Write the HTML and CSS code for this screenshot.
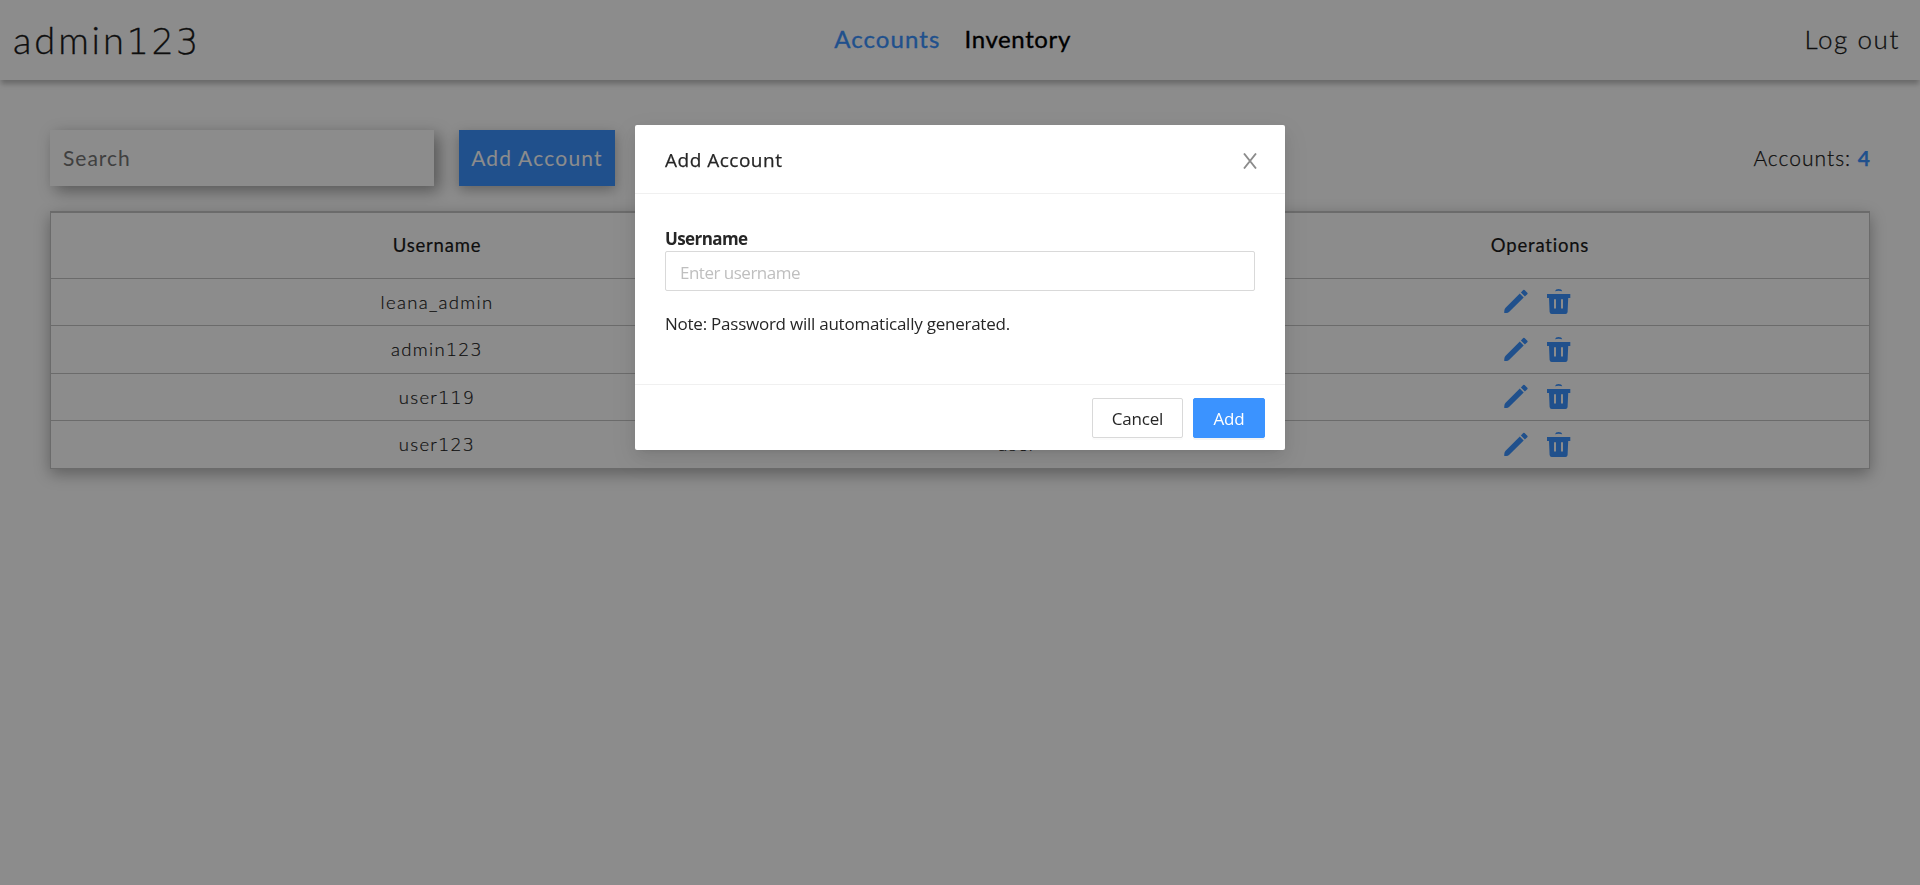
FILE: index.html
```html
<!DOCTYPE html>
<html lang="en">
<head>
<meta charset="utf-8">
<title>Accounts</title>
<link rel="stylesheet" href="styles.css">
</head>
<body>
<svg class="defs" width="0" height="0" aria-hidden="true">
  <symbol id="pencil" viewBox="0 0 24 24">
    <path d="M15.800 4 19.700 7.900 5.300 22.200Q4 23.400 2.500 23.500L.9 23.600Q.1 23.600.2 22.700L.4 20.700Q.5 19.400 1.600 18.200ZM16.900 2.900 19.200.6Q19.900 0 20.600.6L23.300 3.300Q24 4 23.300 4.700L20.900 6.900Z"/>
  </symbol>
  <symbol id="trash" viewBox="0 0 24 25">
    <path fill-rule="evenodd" d="M0 5H23.300V9H21.200L20.600 23Q20.400 25 18.500 25H4.700Q2.800 25 2.600 23L2 9H0ZM7 10.300V19.500H9V10.300ZM14 10.300V19.500H16V10.300ZM8 2.200Q8.500 0 11.500 0 14.700 0 15.200 2.200 11.500 1.500 8 2.200Z"/>
  </symbol>
</svg>
<header class="topbar">
  <div class="brand">admin<span class="num">123</span></div>
  <nav class="nav"><a class="active">Accounts</a><a class="inv">Inventory</a></nav>
  <div class="logout">Log out</div>
</header>
<main class="page">
  <div class="toolbar">
    <div class="search">Search</div>
    <div class="add-account"><span>Add Account</span></div>
    <div class="count">Accounts: <b>4</b></div>
  </div>
  <div class="table">
    <div class="row head"><div>Username</div><div>Role</div><div>Operations</div></div>
    <div class="row"><div>leana_admin</div><div>admin</div><div class="ops"><svg class="pen"><use href="#pencil"/></svg><svg class="bin"><use href="#trash"/></svg></div></div>
    <div class="row"><div>admin<span class="num">123</span></div><div>admin</div><div class="ops"><svg class="pen"><use href="#pencil"/></svg><svg class="bin"><use href="#trash"/></svg></div></div>
    <div class="row"><div>user<span class="num">119</span></div><div>user</div><div class="ops"><svg class="pen"><use href="#pencil"/></svg><svg class="bin"><use href="#trash"/></svg></div></div>
    <div class="row"><div>user<span class="num">123</span></div><div>user</div><div class="ops"><svg class="pen"><use href="#pencil"/></svg><svg class="bin"><use href="#trash"/></svg></div></div>
  </div>
</main>
<div class="overlay">
  <section class="modal">
    <div class="modal-head">
      <div class="title">Add Account</div>
      <svg class="close" viewBox="0 0 14 16"><path d="M1 .5 13 15.500M13 .5 1 15.500"/></svg>
    </div>
    <div class="modal-body">
      <div class="label">Username</div>
      <div class="field">Enter username</div>
      <p class="note">Note: Password will automatically generated.</p>
    </div>
    <div class="modal-foot">
      <div class="btn">Cancel</div>
      <div class="btn primary">Add</div>
    </div>
  </section>
</div>
</body>
</html>
```
FILE: styles.css
```css
* { box-sizing: border-box; }
body { margin: 0; background: #fff; color: #262626; font-family: Lato, sans-serif; font-weight: 300; }
.defs { position: absolute; }
.num { font-family: "DejaVu Sans", "DejaVu Sans Light", sans-serif; font-weight: 200; line-height: 1; }
.topbar { height: 80px; padding: 0 20px 0 13px; display: grid; grid-template-columns: 1fr auto 1fr; align-items: center; background: #fff; box-shadow: 0 5px 5px -1px rgba(0,0,0,.25); }
.brand { margin-bottom: 3px; font-size: 38px; line-height: 44px; letter-spacing: 2.9px; color: #1a1a1a; -webkit-text-stroke: .3px currentColor; }
.brand .num { font-size: 35px; letter-spacing: 2.4px; }
.nav { display: flex; gap: 24px; margin: 0 8px 3px 0; font-size: 24px; font-weight: 400; line-height: 30px; color: #000; -webkit-text-stroke: .35px currentColor; }
.nav .active { color: #3b93ff; letter-spacing: 1.1px; }
.nav .inv { letter-spacing: .6px; }
.logout { justify-self: end; margin-bottom: 3px; font-size: 26px; line-height: 30px; letter-spacing: 1.6px; color: #1a1a1a; -webkit-text-stroke: .3px currentColor; }
.page { padding: 50px; }
.toolbar { display: flex; height: 56px; font-size: 21px; line-height: 55px; }
.search { width: 384px; padding-left: 13px; background: #fff; color: #757575; box-shadow: 5px 5px 15px rgba(0,0,0,.38); letter-spacing: 1px; font-weight: 400; }
.add-account { width: 156px; margin-left: 25px; text-align: center; background: #3b93ff; color: #fff; box-shadow: 0 4px 12px rgba(0,0,0,.3); font-weight: 400; letter-spacing: 1.2px; white-space: nowrap; }
.count { margin-left: auto; letter-spacing: 1px; color: #1a1a1a; -webkit-text-stroke: .25px currentColor; }
.count b { color: #3b93ff; font-weight: 700; letter-spacing: 0; }
.table { margin-top: 25px; height: 258px; border: 1px solid #c4c4c4; border-top-width: 2px; box-shadow: 0 5px 15px rgba(0,0,0,.32); background: #fff; display: grid; grid-template-rows: 65px 47px 48px 47px 48px; }
.row { display: grid; grid-template-columns: 772px 388px 658px; align-items: center; text-align: center; font-size: 18.500px; line-height: 24px; letter-spacing: 1.3px; border-top: 1px solid #c4c4c4; color: #1a1a1a; padding-bottom: 1px; -webkit-text-stroke: .2px currentColor; }
.row .num { font-size: 17.500px; letter-spacing: 1.2px; }
.head { border-top: 0; font-weight: 400; letter-spacing: .8px; padding-bottom: 2px; }
.ops { display: flex; justify-content: center; gap: 19px; padding: 0 5px 0 0; fill: #3b93ff; -webkit-text-stroke: 0; }
.pen, .bin { width: 24px; height: 25px; }
.overlay { position: fixed; inset: 0; padding-top: 125px; background: rgba(0,0,0,.45); font-family: "Open Sans", sans-serif; font-weight: 400; font-size: 17px; }
.modal { width: 650px; height: 325px; margin: 0 auto; background: #fff; border-radius: 2px; display: flex; flex-direction: column; box-shadow: 0 3px 6px -4px rgba(0,0,0,.12), 0 6px 16px rgba(0,0,0,.08), 0 9px 28px 8px rgba(0,0,0,.05); }
.modal-head { height: 69px; padding: 0 28px 0 30px; border-bottom: 1px solid #f0f0f0; display: flex; align-items: center; justify-content: space-between; }
.title { margin-top: 1px; font-weight: 500; font-size: 19px; line-height: 26px; letter-spacing: .5px; -webkit-text-stroke: .25px currentColor; }
.close { width: 14px; height: 16px; margin-top: 4px; fill: none; stroke: #8c8c8c; stroke-width: 1.900; }
.modal-body { flex: 1; padding: 30px; }
.label { height: 27px; font-weight: 700; line-height: 29px; letter-spacing: -.6px; }
.field { height: 40px; padding-left: 14px; border: 1px solid #d9d9d9; border-radius: 2px; line-height: 41px; letter-spacing: -.5px; color: #bfbfbf; }
.note { margin: 19px 0 0; line-height: 27px; letter-spacing: -.24px; }
.modal-foot { height: 66px; padding: 0 20px; border-top: 1px solid #f0f0f0; display: flex; justify-content: flex-end; align-items: center; gap: 10px; }
.btn { width: 91px; height: 40px; margin-top: 1px; border: 1px solid #d9d9d9; border-radius: 2px; line-height: 39px; letter-spacing: -.2px; text-align: center; box-shadow: 0 2px 0 rgba(0,0,0,.016); }
.btn.primary { width: 72px; background: #3b93ff; border-color: #3b93ff; color: #fff; box-shadow: 0 2px 0 rgba(0,0,0,.045); }
```
